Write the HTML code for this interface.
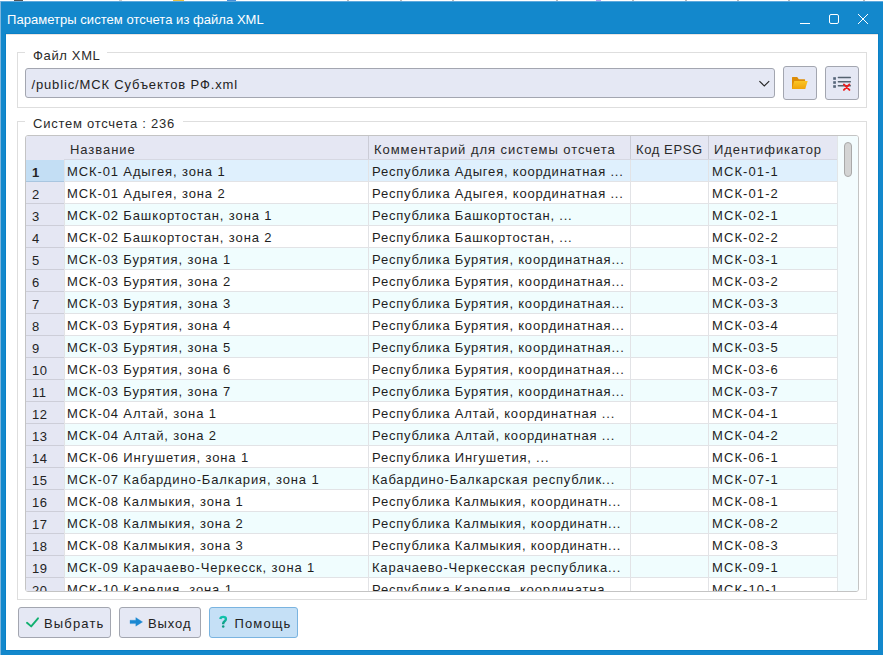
<!DOCTYPE html>
<html><head><meta charset="utf-8">
<style>
*{box-sizing:border-box;margin:0;padding:0}
html,body{width:883px;height:655px;overflow:hidden;background:#fff}
body{position:relative;font-family:"Liberation Sans",sans-serif;font-size:13px;color:#232323}
.abs{position:absolute}
#win{position:absolute;left:0;top:1px;width:883px;height:654px;background:#1388cc}
#edge{position:absolute;left:0;top:1px;width:1px;height:654px;background:#7db6de}
#edget{position:absolute;left:0;top:1px;width:883px;height:1px;background:#5fa9dd}
#inner{position:absolute;left:5px;top:33px;width:874px;height:618px;border:1px solid #0a80c6}
#title{position:absolute;left:7px;top:12px;color:#fff;font-size:13px;letter-spacing:0.04px;line-height:16px;white-space:nowrap}
#content{position:absolute;left:6px;top:34px;width:872px;height:616px;background:#fff}
.gb{position:absolute;border:1px solid #dedede}
.gbt{position:absolute;background:#fff;padding:0 0 0 0;white-space:nowrap;line-height:16px;color:#2a2a2a;letter-spacing:0.3px}
.combo{position:absolute;left:25px;top:68px;width:750px;height:30px;background:#e5e8f4;border:1px solid #a3a6b0;border-radius:3px}
.combo .t{position:absolute;left:5.5px;top:8px;line-height:16px;letter-spacing:0.85px;white-space:nowrap;color:#222}
.tb{position:absolute;top:66px;width:34px;height:34px;background:#e5e8f4;border:1px solid #a3a6b0;border-radius:3px}
#table{position:absolute;left:25px;top:135px;width:834px;height:457px;border:1px solid #c4c4c4;border-radius:3px;overflow:hidden;background:#fff}
.hdr{position:absolute;left:0;top:0;width:812px;height:24px;background:#e5e7f3}
.hdrl{position:absolute;left:38px;top:23px;width:774px;height:1px;background:#d6d8e2}
.hc{position:absolute;top:0;height:23px;border-left:1px solid #cbccd6;line-height:27px;padding-left:5px;white-space:nowrap;letter-spacing:0.95px;color:#2a2a2a}
.r{position:absolute;left:0;width:812px;height:22px;background:#fff}
.r.alt{background:#f0fdfe}
.r.sel{background:#dff0fd}
.rh{position:absolute;left:0;top:0;width:38px;height:22px;background:#e5e7f3;border-bottom:1px solid #cdced8;line-height:25px;padding-left:6px;letter-spacing:0.5px}
.r.sel .rh{background:#c3def4;font-weight:bold;border-bottom-color:#a9c6e0}
.c{position:absolute;top:0;height:22px;border-left:1px solid #e2e3e6;border-bottom:1px solid #e2e3e6;line-height:24px;padding-left:2px;white-space:nowrap;overflow:hidden;letter-spacing:0.88px;color:#1e1e1e}
.c1{left:38px;width:305px}
.c2{left:342px;width:263px;padding-left:3px!important;letter-spacing:0.8px!important}
.c3{left:604px;width:79px}
.c4{left:682px;width:130px;letter-spacing:1.1px!important;padding-left:3px!important}
.sb{position:absolute;left:811px;top:0;width:22px;height:455px;background:#f3fcfe;border-left:1px solid #e2e6e8}
.thumb{position:absolute;left:6px;top:6px;width:8px;height:35px;background:#d4d4d4;border:1px solid #a9a9a9;border-radius:5px}
.btn{position:absolute;top:607px;height:31px;background:#e5e8f4;border:1px solid #a3a6b0;border-radius:3px}
.btn .t{position:absolute;top:8px;line-height:16px;white-space:nowrap;letter-spacing:0.6px;color:#222}
</style></head><body>
<div style="position:absolute;left:0;top:0;width:883px;height:1px;background:#fff"></div>
<div id="win"></div>
<div id="edget"></div>
<div id="edge"></div>
<div class="abs" style="left:14px;top:0;width:9px;height:1px;background:#555"></div>
<div class="abs" style="left:119px;top:0;width:3px;height:1px;background:#ccc"></div>
<div class="abs" style="left:173px;top:0;width:11px;height:1px;background:#e8c040"></div>
<div class="abs" style="left:227px;top:0;width:9px;height:1px;background:#4a90d8"></div>
<div class="abs" style="left:347px;top:0;width:2px;height:1px;background:#bbb"></div>
<div class="abs" style="left:400px;top:0;width:2px;height:1px;background:#bbb"></div>
<div class="abs" style="left:452px;top:0;width:2px;height:1px;background:#bbb"></div>
<div class="abs" style="left:556px;top:0;width:2px;height:1px;background:#bbb"></div>
<div class="abs" style="left:596px;top:0;width:5px;height:1px;background:#b8a8f0"></div>
<div class="abs" style="left:632px;top:0;width:2px;height:1px;background:#bbb"></div>
<div class="abs" style="left:685px;top:0;width:2px;height:1px;background:#bbb"></div>
<div class="abs" style="left:737px;top:0;width:2px;height:1px;background:#bbb"></div>
<div class="abs" style="left:788px;top:0;width:2px;height:1px;background:#bbb"></div>
<div class="abs" style="left:863px;top:0;width:2px;height:1px;background:#bbb"></div>
<div id="title">Параметры систем отсчета из файла XML</div>
<!-- window buttons -->
<svg class="abs" style="left:790px;top:8px" width="90" height="22" viewBox="0 0 90 22">
 <line x1="10" y1="15.5" x2="20" y2="15.5" stroke="#fff" stroke-width="1"/>
 <rect x="39.5" y="6.5" width="9" height="9" rx="1.5" fill="none" stroke="#fff" stroke-width="1"/>
 <path d="M68 6 L78 16 M78 6 L68 16" stroke="#fff" stroke-width="1"/>
</svg>
<div id="inner"></div>
<div id="content"></div>
<div style="position:absolute;left:6px;top:34px;width:872px;height:1px;background:#ebe5e2"></div>

<!-- group 1 -->
<div class="gb" style="left:17px;top:52px;width:850px;height:56px"></div>
<div class="gbt" style="left:25px;top:48px;padding:0 6px 0 8px;letter-spacing:0.65px">Файл XML</div>
<div class="combo"><div class="t">/public/МСК Субъектов РФ.xml</div>
 <svg class="abs" style="left:732px;top:11px" width="14" height="8" viewBox="0 0 14 8"><path d="M1.4 1.2 L6.3 5.9 L11.2 1.2" fill="none" stroke="#262626" stroke-width="1.15"/></svg>
</div>
<div class="tb" style="left:783px"><svg class="abs" style="left:-1px;top:-1px" width="34" height="34" viewBox="0 0 34 34">
 <defs><linearGradient id="fg" x1="0" y1="0" x2="0" y2="1"><stop offset="0" stop-color="#fbc625"/><stop offset="1" stop-color="#f0a40a"/></linearGradient></defs>
 <path d="M9 11.4 Q9 11 9.4 11 L14.2 11 L15.8 13.2 L21.6 13.2 Q22.1 13.2 22.1 13.7 L22.1 23 L9 23 Z" fill="#dd8d08"/>
 <path d="M11.2 15 L24.7 15 L22.2 23 L9 23 Z" fill="url(#fg)"/>
</svg></div>
<div class="tb" style="left:825px"><svg class="abs" style="left:-1px;top:-1px" width="34" height="34" viewBox="0 0 34 34">
 <rect x="8.2" y="11.2" width="2.7" height="2.6" fill="#56667a"/><rect x="8.2" y="15.2" width="2.7" height="2.6" fill="#56667a"/><rect x="8.2" y="19.2" width="2.7" height="2.6" fill="#56667a"/>
 <rect x="12.7" y="10.8" width="13.3" height="1.4" rx="0.6" fill="#55626f"/><rect x="12.7" y="15" width="13.3" height="1.4" rx="0.6" fill="#55626f"/><rect x="12.7" y="19" width="13.3" height="1.4" rx="0.6" fill="#55626f"/>
 <path d="M18.9 18.4 L24.4 23.9 M24.4 18.4 L18.9 23.9" stroke="#ee1c1c" stroke-width="1.9" stroke-linecap="round"/>
</svg></div>

<!-- group 2 -->
<div class="gb" style="left:17px;top:121px;width:850px;height:479px"></div>
<div class="gbt" style="left:25px;top:116px;padding:0 8px 0 8px;letter-spacing:0.75px">Систем отсчета : 236</div>
<div id="table">
 <div class="hdr">
  <div class="hc" style="left:38px;width:305px;border-left:none;padding-left:6px">Название</div>
  <div class="hc" style="left:342px;width:263px">Комментарий для системы отсчета</div>
  <div class="hc" style="left:604px;width:79px;letter-spacing:0.6px">Код EPSG</div>
  <div class="hc" style="left:682px;width:130px">Идентификатор</div>
  <div class="hdrl"></div>
 </div>
<div class="r sel" style="top:24px"><div class="rh">1</div><div class="c c1">МСК-01 Адыгея, зона 1</div><div class="c c2">Республика Адыгея, координатная ...</div><div class="c c3"></div><div class="c c4">МСК-01-1</div></div>
<div class="r" style="top:46px"><div class="rh">2</div><div class="c c1">МСК-01 Адыгея, зона 2</div><div class="c c2">Республика Адыгея, координатная ...</div><div class="c c3"></div><div class="c c4">МСК-01-2</div></div>
<div class="r alt" style="top:68px"><div class="rh">3</div><div class="c c1">МСК-02 Башкортостан, зона 1</div><div class="c c2">Республика Башкортостан, ...</div><div class="c c3"></div><div class="c c4">МСК-02-1</div></div>
<div class="r" style="top:90px"><div class="rh">4</div><div class="c c1">МСК-02 Башкортостан, зона 2</div><div class="c c2">Республика Башкортостан, ...</div><div class="c c3"></div><div class="c c4">МСК-02-2</div></div>
<div class="r alt" style="top:112px"><div class="rh">5</div><div class="c c1">МСК-03 Бурятия, зона 1</div><div class="c c2">Республика Бурятия, координатная...</div><div class="c c3"></div><div class="c c4">МСК-03-1</div></div>
<div class="r" style="top:134px"><div class="rh">6</div><div class="c c1">МСК-03 Бурятия, зона 2</div><div class="c c2">Республика Бурятия, координатная...</div><div class="c c3"></div><div class="c c4">МСК-03-2</div></div>
<div class="r alt" style="top:156px"><div class="rh">7</div><div class="c c1">МСК-03 Бурятия, зона 3</div><div class="c c2">Республика Бурятия, координатная...</div><div class="c c3"></div><div class="c c4">МСК-03-3</div></div>
<div class="r" style="top:178px"><div class="rh">8</div><div class="c c1">МСК-03 Бурятия, зона 4</div><div class="c c2">Республика Бурятия, координатная...</div><div class="c c3"></div><div class="c c4">МСК-03-4</div></div>
<div class="r alt" style="top:200px"><div class="rh">9</div><div class="c c1">МСК-03 Бурятия, зона 5</div><div class="c c2">Республика Бурятия, координатная...</div><div class="c c3"></div><div class="c c4">МСК-03-5</div></div>
<div class="r" style="top:222px"><div class="rh">10</div><div class="c c1">МСК-03 Бурятия, зона 6</div><div class="c c2">Республика Бурятия, координатная...</div><div class="c c3"></div><div class="c c4">МСК-03-6</div></div>
<div class="r alt" style="top:244px"><div class="rh">11</div><div class="c c1">МСК-03 Бурятия, зона 7</div><div class="c c2">Республика Бурятия, координатная...</div><div class="c c3"></div><div class="c c4">МСК-03-7</div></div>
<div class="r" style="top:266px"><div class="rh">12</div><div class="c c1">МСК-04 Алтай, зона 1</div><div class="c c2">Республика Алтай, координатная ...</div><div class="c c3"></div><div class="c c4">МСК-04-1</div></div>
<div class="r alt" style="top:288px"><div class="rh">13</div><div class="c c1">МСК-04 Алтай, зона 2</div><div class="c c2">Республика Алтай, координатная ...</div><div class="c c3"></div><div class="c c4">МСК-04-2</div></div>
<div class="r" style="top:310px"><div class="rh">14</div><div class="c c1">МСК-06 Ингушетия, зона 1</div><div class="c c2">Республика Ингушетия, ...</div><div class="c c3"></div><div class="c c4">МСК-06-1</div></div>
<div class="r alt" style="top:332px"><div class="rh">15</div><div class="c c1">МСК-07 Кабардино-Балкария, зона 1</div><div class="c c2">Кабардино-Балкарская республик...</div><div class="c c3"></div><div class="c c4">МСК-07-1</div></div>
<div class="r" style="top:354px"><div class="rh">16</div><div class="c c1">МСК-08 Калмыкия, зона 1</div><div class="c c2">Республика Калмыкия, координатн...</div><div class="c c3"></div><div class="c c4">МСК-08-1</div></div>
<div class="r alt" style="top:376px"><div class="rh">17</div><div class="c c1">МСК-08 Калмыкия, зона 2</div><div class="c c2">Республика Калмыкия, координатн...</div><div class="c c3"></div><div class="c c4">МСК-08-2</div></div>
<div class="r" style="top:398px"><div class="rh">18</div><div class="c c1">МСК-08 Калмыкия, зона 3</div><div class="c c2">Республика Калмыкия, координатн...</div><div class="c c3"></div><div class="c c4">МСК-08-3</div></div>
<div class="r alt" style="top:420px"><div class="rh">19</div><div class="c c1">МСК-09 Карачаево-Черкесск, зона 1</div><div class="c c2">Карачаево-Черкесская республика...</div><div class="c c3"></div><div class="c c4">МСК-09-1</div></div>
<div class="r" style="top:442px"><div class="rh">20</div><div class="c c1">МСК-10 Карелия, зона 1</div><div class="c c2">Республика Карелия, координатна...</div><div class="c c3"></div><div class="c c4">МСК-10-1</div></div>
 <div class="sb"><div class="thumb"></div></div>
</div>

<!-- buttons -->
<div class="btn" style="left:18px;width:93px"><svg class="abs" style="left:-1px;top:-1px" width="24" height="31" viewBox="0 0 24 31"><path d="M9 15.8 L13.2 19.4 L20 11.3" fill="none" stroke="#12b070" stroke-width="1.9" stroke-linecap="round" stroke-linejoin="round"/></svg><div class="t" style="left:25px;letter-spacing:1.15px">Выбрать</div></div>
<div class="btn" style="left:119px;width:82px"><svg class="abs" style="left:-1px;top:-1px" width="26" height="31" viewBox="0 0 26 31"><path d="M11 13.2 L16.8 13.2 L16.8 10.6 L23.6 14.9 L16.8 19.2 L16.8 16.6 L11 16.6 Z" fill="#1a88d2" stroke="#1a88d2" stroke-width="0.3" stroke-linejoin="round"/></svg><div class="t" style="left:28px;letter-spacing:0.9px">Выход</div></div>
<div class="btn" style="left:209px;width:89px;background:#c5e0f6;border-color:#7ab4e0"><svg class="abs" style="left:-1px;top:-1px" width="26" height="31" viewBox="0 0 26 31"><defs><linearGradient id="qg" x1="0" y1="0" x2="0" y2="1"><stop offset="0" stop-color="#12c4ad"/><stop offset="1" stop-color="#0e9a80"/></linearGradient></defs><path d="M11.3 12 Q11.6 9.9 14.2 9.9 Q16.9 9.9 16.9 12 Q16.9 13.3 15.6 14.2 Q14.2 15.2 14.2 16.6 L14.2 17.3" fill="none" stroke="url(#qg)" stroke-width="2.4" stroke-linecap="butt"/><circle cx="14.2" cy="19.6" r="1.25" fill="#0e9a80"/></svg><div class="t" style="left:24.6px;letter-spacing:1.1px">Помощь</div></div>
</body></html>
